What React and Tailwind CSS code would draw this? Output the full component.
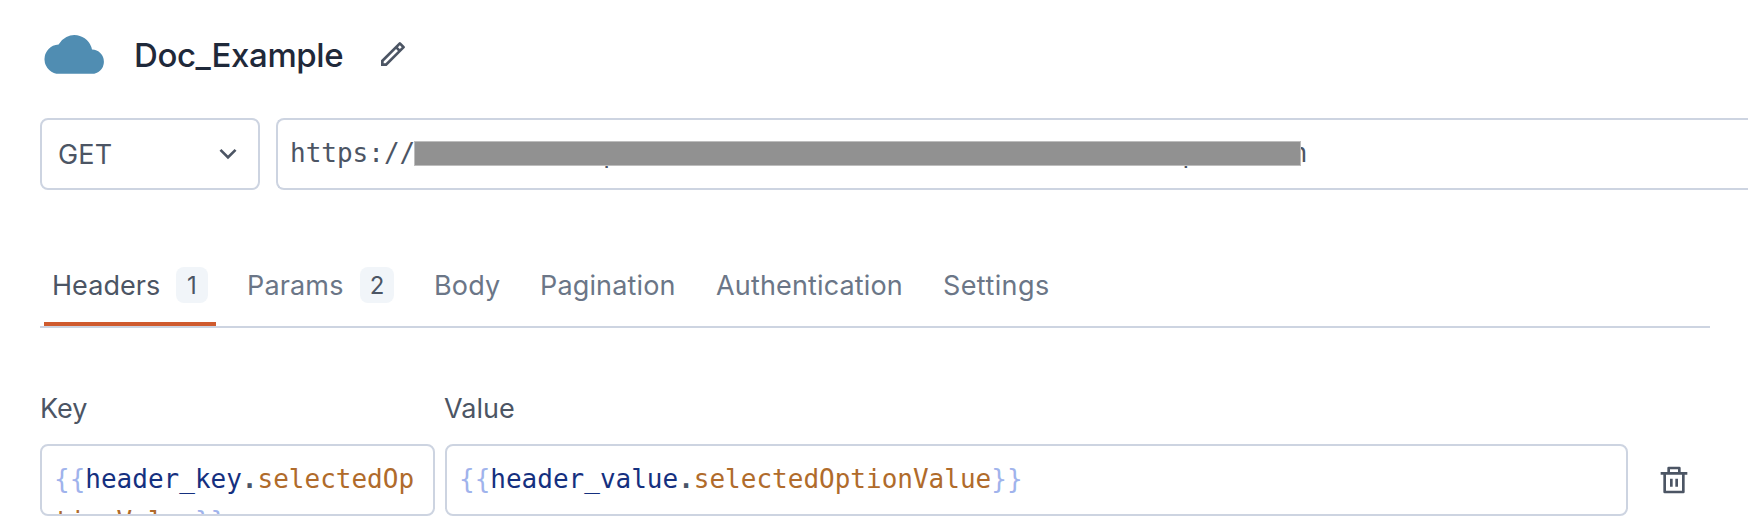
const urlText = 'https://' + ' '.repeat(12) + 'p' + ' '.repeat(36) + 'p' + ' '.repeat(6) + 'n';

const tabs = [
  { label: 'Headers', count: 1, active: true, box: 'w-[172px] pl-[8px]', text: 'w-[124px] tracking-[0.05px]', badge: 'w-[32px]' },
  { label: 'Params', count: 2, box: 'w-[187px] pl-[31px]', text: 'w-[113px]', badge: 'w-[34px]' },
  { label: 'Body', box: 'w-[107px] pl-[31px]' },
  { label: 'Pagination', box: 'w-[175px] pl-[30px]' },
  { label: 'Authentication', box: 'w-[228px] pl-[31px]' },
  { label: 'Settings', box: 'w-[140px] pl-[30px]', text: 'tracking-[0.4px]' },
];

function Binding({ name, prop }) {
  return (
    <>
      <span className="text-[#a0b3ec]">{'{{'}</span>
      <span className="text-[#15307f]">{name}</span>
      <span className="font-bold text-[#4a5568]">.</span>
      <span className="text-[#b06b2b]">{prop}</span>
      <span className="text-[#a0b3ec]">{'}}'}</span>
    </>
  );
}

function Field({ className, children }) {
  return (
    <div className={`h-[72px] shrink-0 overflow-hidden rounded-lg border-2 border-[#cdd4e1] px-[12px] pt-[12px] font-['DejaVu_Sans_Mono',monospace] text-[26px] leading-[42px] break-all ${className}`}>
      {children}
    </div>
  );
}

export default function App() {
  return (
    <div className="flex h-[524px] w-full flex-col overflow-hidden bg-white pl-10 font-['Inter',sans-serif] text-[27px] text-[#4c5564]">
      <header className="flex h-[118px] shrink-0 items-start pt-[31px]">
        <svg className="mt-[3px] ml-[4px] h-[40px] w-[60px] shrink-0" viewBox="0 0 60 40" fill="#508db2">
          <path d="M15.8 39.8a14.7 14.7 0 0 1-1.2-29.4A18 18 0 0 1 48 15.6A12.1 12.1 0 0 1 47.6 39.8Z" />
        </svg>
        <h1 className="ml-[30px] w-[243px] text-[33px] leading-[48px] font-medium tracking-[-0.4px] text-[#1f293a]">Doc_Example</h1>
        <svg className="mt-[7px] h-[32px] w-[32px] shrink-0" viewBox="0 0 24 24" fill="#4c5564">
          <path d="M15.728 9.686l-1.414-1.414L5 17.586V19h1.414l9.314-9.314zm1.414-1.414l1.414-1.414-1.414-1.414-1.414 1.414 1.414 1.414zM7.242 21H3v-4.243L16.435 3.322a1 1 0 0 1 1.414 0l2.829 2.829a1 1 0 0 1 0 1.414L7.243 21z" />
        </svg>
      </header>

      <div className="flex h-[72px] shrink-0 gap-4">
        <div className="flex w-[220px] shrink-0 items-center justify-between rounded-lg border-2 border-[#cdd4e1] pr-[14px] pl-[16px]">
          <span className="pt-[2px] tracking-[0.15px]">GET</span>
          <svg className="h-[32px] w-[32px]" viewBox="0 0 24 24" fill="#4c5564">
            <path d="M12 13.172l4.95-4.95 1.414 1.414L12 16 5.636 9.636 7.05 8.222z" />
          </svg>
        </div>
        <div className="relative grow rounded-l-lg border-2 border-r-0 border-[#cdd4e1] pt-[12px] pl-[12px] font-['DejaVu_Sans_Mono',monospace] text-[26px] leading-[42px] whitespace-pre">
          {urlText}
          <div className="absolute top-[21px] left-[136px] h-[25px] w-[887px] border border-[#bdbdbd] bg-[#919191]" />
        </div>
      </div>

      <nav className="mt-[60px] flex h-[78px] w-[1670px] shrink-0 border-b-2 border-[#cdd4e1] pl-[4px] tracking-[0.15px]">
        {tabs.map((tab) => (
          <div
            key={tab.label}
            className={`flex h-[76px] shrink-0 items-start pt-[17px] leading-[38px] whitespace-nowrap ${tab.box} ${tab.active ? 'border-b-4 border-[#cf5b2e]' : 'text-[#6b7687]'}`}
          >
            <span className={tab.text}>{tab.label}</span>
            {tab.count && (
              <span className={`h-[36px] shrink-0 rounded-lg bg-[#f1f5f9] text-center text-[24px] tracking-normal text-[#4c5564] ${tab.badge}`}>{tab.count}</span>
            )}
          </div>
        ))}
      </nav>

      <div className="mt-[60px] flex h-[56px] shrink-0 leading-[42px]">
        <div className="w-[404px]">Key</div>
        <div>Value</div>
      </div>
      <div className="flex shrink-0">
        <Field className="w-[395px]">
          <Binding name="header_key" prop="selectedOptionValue" />
        </Field>
        <Field className="ml-[10px] w-[1183px]">
          <Binding name="header_value" prop="selectedOptionValue" />
        </Field>
        <svg className="mt-[20px] ml-[30px] h-[32px] w-[32px] shrink-0" viewBox="0 0 24 24" fill="#4c5564">
          <path d="M17 6h5v2h-2v13a1 1 0 0 1-1 1H5a1 1 0 0 1-1-1V8H2V6h5V3a1 1 0 0 1 1-1h8a1 1 0 0 1 1 1v3zm1 2H6v12h12V8zm-9 3h2v6H9v-6zm4 0h2v6h-2v-6zM9 4v2h6V4H9z" />
        </svg>
      </div>
    </div>
  );
}
